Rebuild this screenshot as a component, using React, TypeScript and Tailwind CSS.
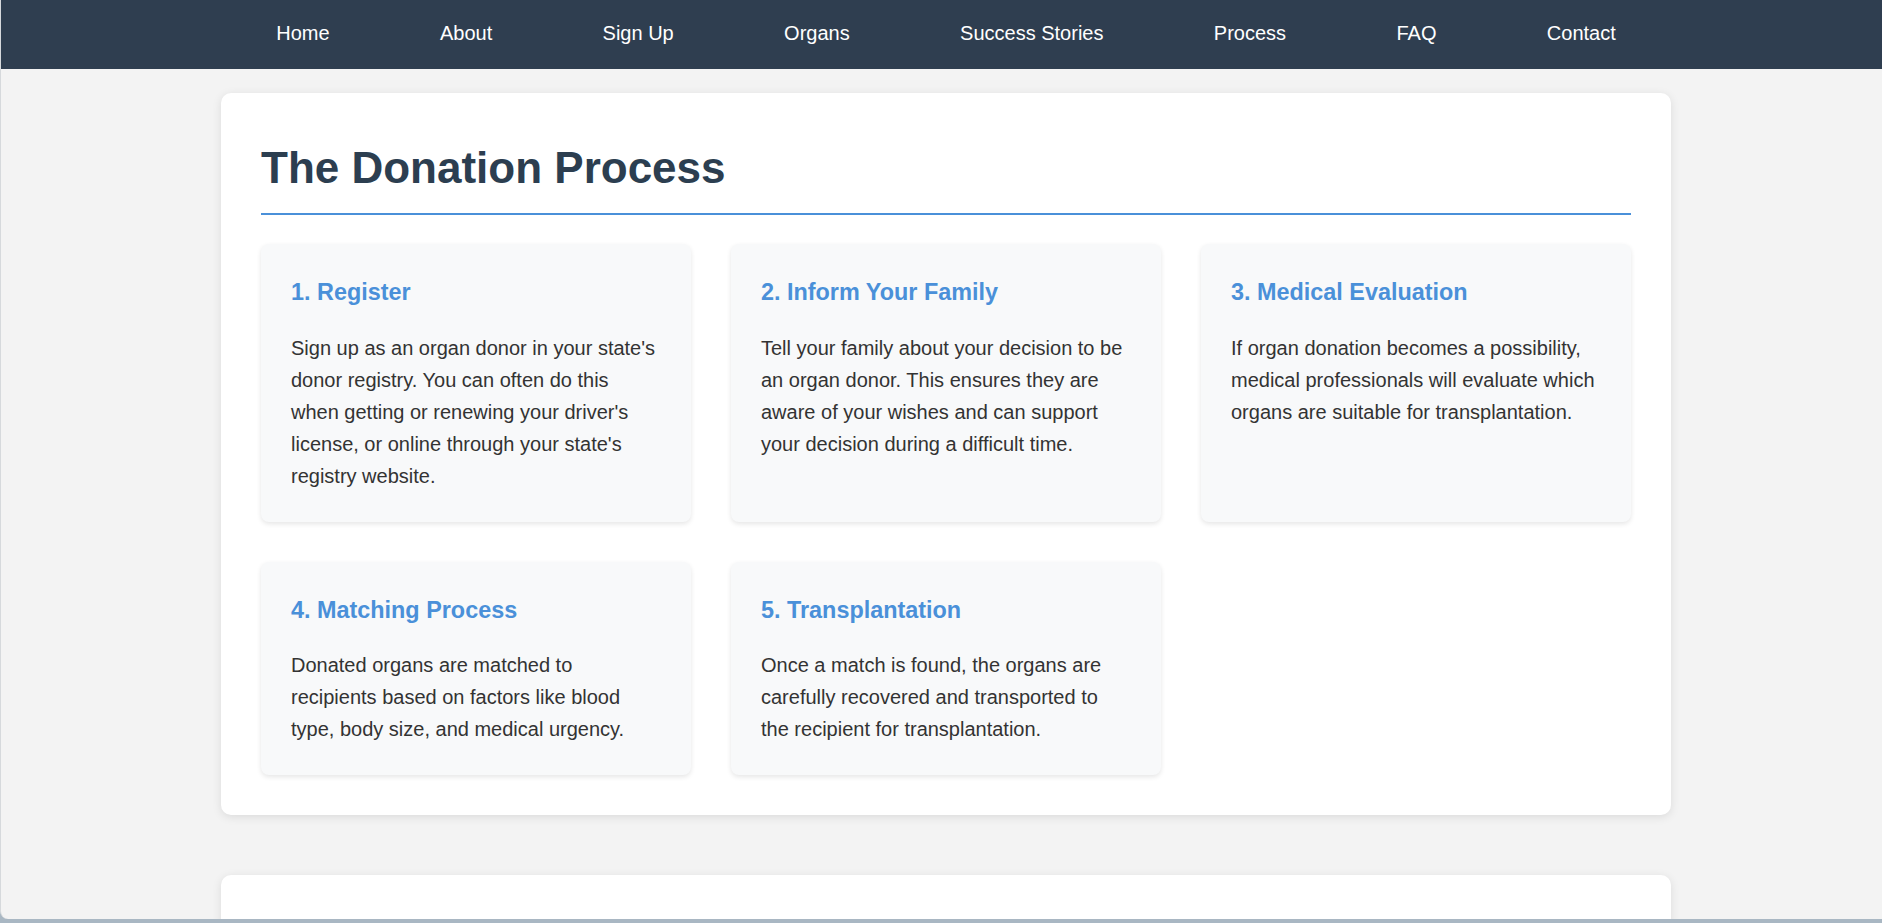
const links = ["Home", "About", "Sign Up", "Organs", "Success Stories", "Process", "FAQ", "Contact"]

const steps = [
  {
    title: "1. Register",
    text: "Sign up as an organ donor in your state's donor registry. You can often do this when getting or renewing your driver's license, or online through your state's registry website.",
  },
  {
    title: "2. Inform Your Family",
    text: "Tell your family about your decision to be an organ donor. This ensures they are aware of your wishes and can support your decision during a difficult time.",
  },
  {
    title: "3. Medical Evaluation",
    text: "If organ donation becomes a possibility, medical professionals will evaluate which organs are suitable for transplantation.",
  },
  {
    title: "4. Matching Process",
    text: "Donated organs are matched to recipients based on factors like blood type, body size, and medical urgency.",
  },
  {
    title: "5. Transplantation",
    text: "Once a match is found, the organs are carefully recovered and transported to the recipient for transplantation.",
  },
]

export default function App() {
  return (
    <div className="h-screen overflow-hidden bg-[#a9b7c3] font-['Liberation_Sans',Arial,sans-serif]">
      <div className="h-[919px] overflow-hidden rounded-bl-[8px] border-l border-[#d6d9dc] bg-[#f3f3f3] leading-[1.6] text-[#333]">
        {/* nav */}
        <nav className="h-[69px] bg-[#2f3e50]">
          <ul className="ml-[220px] flex h-full w-[1450px] items-center justify-around pb-[4px]">
            {links.map((l) => (
              <li key={l}>
                <a href="#" className="text-[20px] text-white">
                  {l}
                </a>
              </li>
            ))}
          </ul>
        </nav>

        <main className="ml-[220px] mt-[24px] w-[1450px]">
          <section className="rounded-[10px] bg-white p-[40px] shadow-[0_2px_10px_rgba(0,0,0,0.1)]">
            <h2 className="border-b-2 border-[#4a90d9] pb-[10px] text-[44px] font-bold leading-[1.6] text-[#2c3e50]">
              The Donation Process
            </h2>

            <div className="mt-[29px] grid grid-cols-3 gap-[40px]">
              {steps.map((s) => (
                <div
                  key={s.title}
                  className="rounded-[8px] bg-[#f8f9fa] p-[30px] shadow-[0_2px_5px_rgba(0,0,0,0.1)]"
                >
                  <h3 className="mb-[20px] text-[23.4px] font-bold text-[#4a90d9]">{s.title}</h3>
                  <p className="text-[20px] leading-[32px]">{s.text}</p>
                </div>
              ))}
            </div>
          </section>

          <section className="mt-[60px] h-[300px] rounded-[10px] bg-white shadow-[0_2px_10px_rgba(0,0,0,0.1)]"></section>
        </main>
      </div>
    </div>
  )
}
